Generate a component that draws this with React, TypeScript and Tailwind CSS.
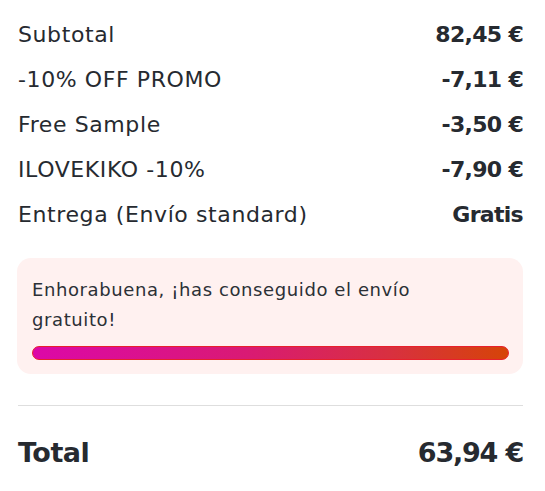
const rows: { label: string; value: string }[] = [
  { label: 'Subtotal', value: '82,45 €' },
  { label: '-10% OFF PROMO', value: '-7,11 €' },
  { label: 'Free Sample', value: '-3,50 €' },
  { label: 'ILOVEKIKO -10%', value: '-7,90 €' },
  { label: 'Entrega (Envío standard)', value: 'Gratis' },
];

export default function App() {
  return (
    <div
      className="min-h-screen bg-white pl-[18px] pr-[22px] pt-[12px] text-[#262a30]"
      style={{ fontFamily: '"DejaVu Sans", "Open Sans", sans-serif' }}
    >
      <div className="flex flex-col">
        {rows.map((row) => (
          <div key={row.label} className="flex h-[45px] items-center justify-between text-[22px]">
            <span className="tracking-[0.6px]">{row.label}</span>
            <span className="font-bold tracking-[-0.7px]">{row.value}</span>
          </div>
        ))}
      </div>

      <div className="mt-[21px] -ml-px rounded-[14px] bg-[#fff1f0] pl-[15px] pr-[14px] pt-[17px] pb-[14px]">
        <p className="text-[18px] leading-[30px] tracking-[0.6px] text-[#2c3036]">
          Enhorabuena, ¡has conseguido el envío
          <br />
          gratuito!
        </p>
        <div className="mt-[11px] h-[14px] rounded-full border border-[#e8202c] bg-[linear-gradient(90deg,#dc08a8_0%,#d91a74_45%,#d83040_75%,#d64408_100%)]" />
      </div>

      <div className="mt-[31px] border-t border-[#dedede]" />

      <div className="flex h-[50px] mt-[22px] items-center justify-between text-[27px] font-bold">
        <span className="tracking-[-0.5px]">Total</span>
        <span className="tracking-[-1.2px]">63,94 €</span>
      </div>
    </div>
  );
}
